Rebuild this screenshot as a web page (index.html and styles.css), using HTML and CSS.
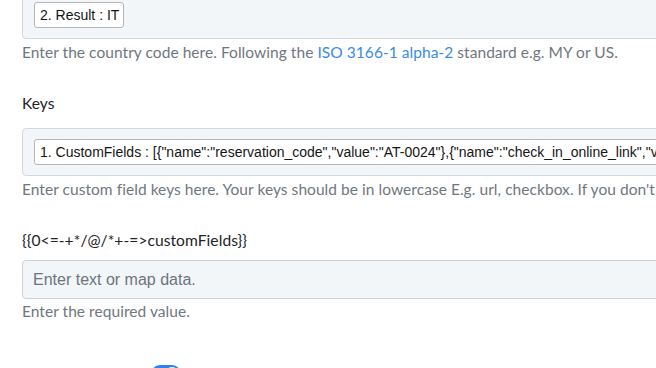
FILE: index.html
```html
<!DOCTYPE html>
<html>
<head>
<meta charset="utf-8">
<link rel="stylesheet" href="styles.css">
</head>
<body>
<div class="page">
  <div class="field first">
    <div class="box">
      <span class="chip">2. Result : IT</span>
    </div>
    <div class="help">Enter the country code here. Following the <a class="link">ISO 3166-1 alpha-2</a> standard e.g. MY or US.</div>
  </div>

  <div class="field">
    <div class="label">Keys</div>
    <div class="box">
      <span class="chip">1. CustomFields : [{"name":"reservation_code","value":"AT-0024"},{"name":"check_in_online_link","value":"https://example.com/checkin"}]</span>
    </div>
    <div class="help">Enter custom field keys here. Your keys should be in lowercase E.g. url, checkbox. If you don't have any keys, leave this empty.</div>
  </div>

  <div class="field">
    <div class="label">{{0&lt;=-+*/@/*+-=&gt;customFields}}</div>
    <div class="input">Enter text or map data.</div>
    <div class="help tight">Enter the required value.</div>
  </div>

  <div class="toggle-row">
    <span class="toggle-label">mapping</span>
    <span class="toggle"><span class="knob"></span></span>
  </div>
</div>
</body>
</html>
```

FILE: styles.css
```css
html, body {
  margin: 0;
  padding: 0;
  background: #ffffff;
  overflow: hidden;
}
body {
  width: 656px;
  height: 368px;
}
.page {
  padding-left: 22px;
  margin-top: -9px;
  width: 760px;
  font-family: "Lato", "Open Sans", sans-serif;
  letter-spacing: 0.05px;
}
.field {
  display: flex;
  flex-direction: column;
  margin-bottom: 31px;
}
.label {
  font-size: 15.6px;
  line-height: 20px;
  color: #1f2328;
  margin-bottom: 15px;
  white-space: nowrap;
  padding-top: 1px;
  margin-top: -1px;
}
.field:nth-child(3) .label {
  margin-bottom: 10px;
}
.box {
  box-sizing: border-box;
  height: 48px;
  padding: 10px 11px;
  background: #f3f6f9;
  border: 1px solid #d3d8dd;
  border-radius: 4px;
  display: flex;
  align-items: flex-start;
  overflow: hidden;
  white-space: nowrap;
}
.chip {
  display: inline-block;
  box-sizing: border-box;
  height: 26px;
  line-height: 24px;
  padding: 0 4px 0 5px;
  background: #ffffff;
  border: 1px solid #b3b7bc;
  border-radius: 3px;
  font-family: "Liberation Sans", Arial, sans-serif;
  font-size: 14px;
  letter-spacing: 0;
  color: #151515;
  white-space: nowrap;
}
.help {
  margin-top: 3px;
  font-size: 15.5px;
  line-height: 20px;
  color: #6f7780;
  white-space: nowrap;
}
.help.tight {
  margin-top: 2px;
}
.link {
  color: #3a8be6;
  text-decoration: none;
}
.input {
  box-sizing: border-box;
  height: 39px;
  padding: 0 10px;
  background: #f3f6f9;
  border: 1px solid #cdd2d8;
  border-radius: 4px;
  font-family: "Liberation Sans", Arial, sans-serif;
  font-size: 16px;
  letter-spacing: 0;
  line-height: 37px;
  color: #6c7480;
}
.toggle-row {
  display: flex;
  align-items: flex-start;
  gap: 70px;
  padding-top: 9px;
}
.toggle-label {
  font-size: 15.5px;
  line-height: 20px;
  color: #1f2328;
  padding-top: 2px;
}
.toggle {
  display: inline-block;
  position: relative;
  width: 30px;
  height: 18px;
  margin-top: 4px;
  border-radius: 9px;
  background: #2f80ed;
}
.knob {
  position: absolute;
  top: 2px;
  right: 2px;
  width: 14px;
  height: 14px;
  border-radius: 50%;
  background: #ffffff;
}
```
